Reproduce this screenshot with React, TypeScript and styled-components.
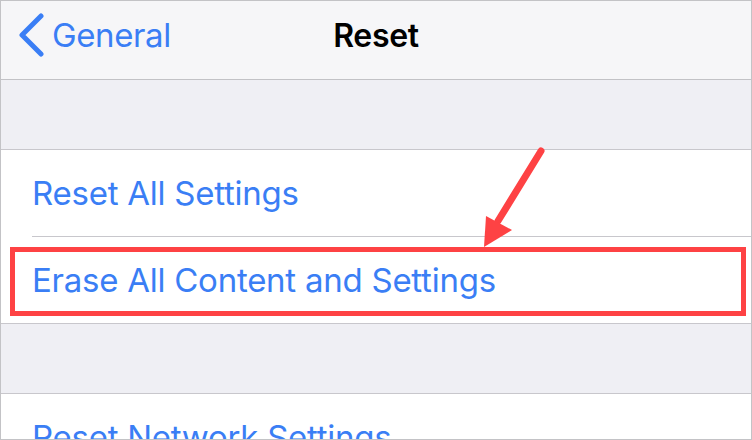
import styled, { createGlobalStyle } from 'styled-components'

const GlobalStyle = createGlobalStyle`
  html, body {
    margin: 0;
    padding: 0;
    background: #ffffff;
  }
  * {
    box-sizing: border-box;
  }
`

const Frame = styled.div`
  position: relative;
  width: 752px;
  height: 440px;
  border: 1px solid #c3c3c6;
  overflow: hidden;
  background: #ffffff;
  font-family: Inter, 'Noto Sans', sans-serif;
`

const NavBar = styled.header`
  height: 79px;
  display: grid;
  grid-template-columns: 1fr auto 1fr;
  align-items: center;
  padding: 0 18px 10px 18px;
  background: #f6f6f8;
  border-bottom: 1px solid #c2c2c6;
`

const BackButton = styled.div`
  display: flex;
  align-items: center;
  gap: 7px;
  color: #3a7ef5;
  font-size: 33px;
  letter-spacing: -0.4px;
`

const Title = styled.h1`
  margin: 0;
  font-size: 32px;
  font-weight: 600;
  color: #000000;
  letter-spacing: -0.3px;
`

const Gap = styled.div`
  height: 70px;
  background: #efeff4;
  border-bottom: 1px solid #c8c7cc;
`

const Group = styled.div`
  background: #ffffff;
  border-bottom: 1px solid #c8c7cc;
`

const Row = styled.div<{ $divider?: boolean }>`
  height: ${p => (p.$divider ? 87 : 86)}px;
  margin-left: 31px;
  display: flex;
  align-items: center;
  color: #3a7ef5;
  font-size: 33px;
  letter-spacing: -0.25px;
  border-bottom: ${p => (p.$divider ? '1px solid #c8c7cc' : 'none')};
`

const Highlight = styled.div`
  position: absolute;
  left: 9px;
  top: 246px;
  width: 736px;
  height: 69px;
  border: 5px solid #fe4244;
  pointer-events: none;
`

const Arrow = styled.svg`
  position: absolute;
  left: 470px;
  top: 140px;
  pointer-events: none;
`

function Chevron() {
  return (
    <svg width="26" height="44" viewBox="0 0 26 44">
      <path
        d="M22 3 L3 22 L22 41"
        fill="none"
        stroke="#3a7ef5"
        strokeWidth="5"
        strokeLinecap="round"
        strokeLinejoin="round"
      />
    </svg>
  )
}

function App() {
  return (
    <>
      <GlobalStyle />
      <Frame>
        <NavBar>
          <BackButton>
            <Chevron />
            <span>General</span>
          </BackButton>
          <Title>Reset</Title>
          <div />
        </NavBar>
        <Gap />
        <Group>
          <Row $divider>Reset All Settings</Row>
          <Row>Erase All Content and Settings</Row>
        </Group>
        <Gap />
        <Group>
          <Row>Reset Network Settings</Row>
        </Group>
        <Highlight />
        <Arrow width="90" height="110" viewBox="0 0 90 110">
          <line x1="70" y1="10" x2="27" y2="80" stroke="#fe4244" strokeWidth="7" strokeLinecap="round" />
          <polygon points="13,106 15,75 41,89" fill="#fe4244" />
        </Arrow>
      </Frame>
    </>
  )
}

export default App
